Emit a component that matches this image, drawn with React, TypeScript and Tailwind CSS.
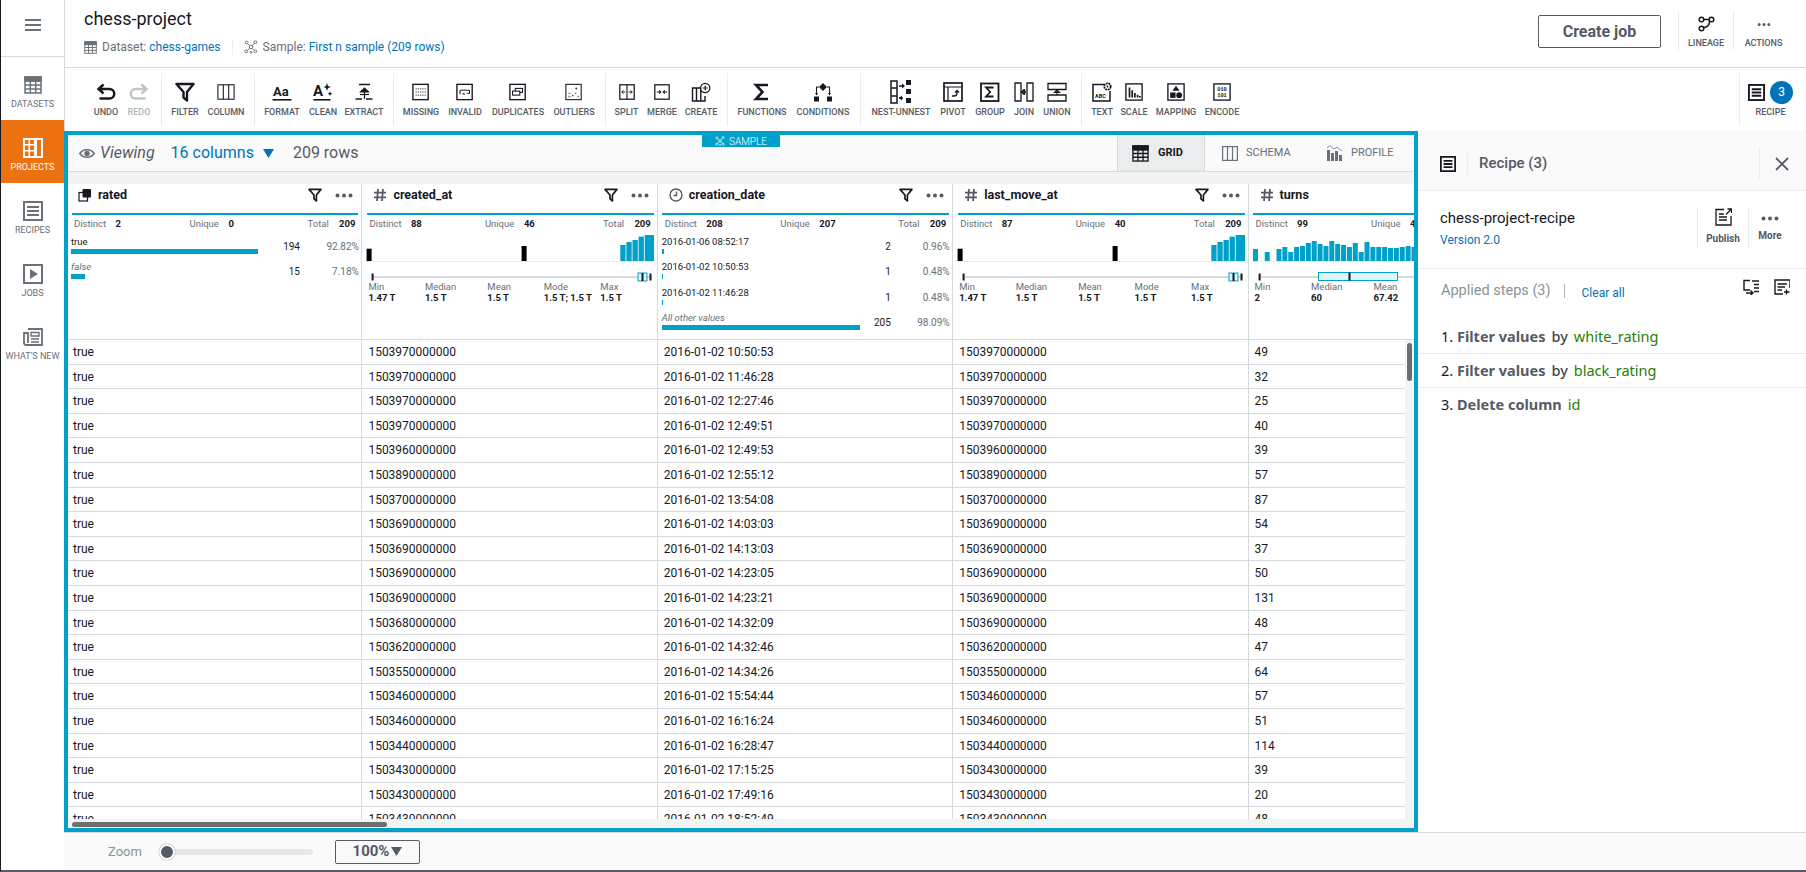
import React from "react";

const cc = { fill: "none", stroke: "currentColor", strokeWidth: 1.6 };

function Sv({ s = 20, children, className = "" }: { s?: number; children: React.ReactNode; className?: string }) {
  return (
    <svg width={s} height={s} viewBox="0 0 20 20" className={className} {...cc}>
      {children}
    </svg>
  );
}

const Dots = ({ className = "" }: { className?: string }) => (
  <svg width="18" height="5" viewBox="0 0 18 5" className={className}>
    <circle cx="2.5" cy="2.5" r="2" fill="currentColor" />
    <circle cx="9" cy="2.5" r="2" fill="currentColor" />
    <circle cx="15.5" cy="2.5" r="2" fill="currentColor" />
  </svg>
);

const FilterIcon = ({ s = 14 }: { s?: number }) => (
  <svg width={s} height={s} viewBox="0 0 20 20" fill="none" stroke="currentColor" strokeWidth="2.4">
    <path d="M1.5 2 H18.5 L12 10 V18.5 L8.5 15.5 V10 Z" strokeLinejoin="round" />
  </svg>
);

const RecipeIcon = ({ s = 18 }: { s?: number }) => (
  <svg width={s} height={s} viewBox="0 0 18 18" fill="none" stroke="currentColor" strokeWidth="2">
    <rect x="1" y="1" width="16" height="16" />
    <path d="M4 5.5 H14 M4 9 H14 M4 12.5 H14" />
  </svg>
);

const GridIcon = ({ s = 16, w = 1.4 }: { s?: number; w?: number }) => (
  <svg width={s} height={s} viewBox="0 0 18 18" fill="none" stroke="currentColor" strokeWidth={w}>
    <rect x="1" y="1" width="16" height="16" />
    <path d="M1 5 H17 M1 9 H17 M1 13 H17 M6.3 5 V17 M11.7 5 V17" />
    <rect x="1" y="1" width="16" height="4" fill="currentColor" />
  </svg>
);

const SampleIcon = ({ s = 14 }: { s?: number }) => (
  <svg width={s} height={s} viewBox="0 0 16 16" fill="none" stroke="currentColor" strokeWidth="1.1">
    <circle cx="3" cy="3" r="1.6" />
    <circle cx="13" cy="2.5" r="1.6" />
    <circle cx="8" cy="8" r="2" />
    <circle cx="2.5" cy="13" r="1.6" />
    <circle cx="13" cy="13" r="1.6" />
    <circle cx="8" cy="14" r="1" />
    <path d="M4.2 4.2 L6.5 6.5 M11.8 3.7 L9.5 6.5 M4 11.8 L6.5 9.5 M11.8 11.8 L9.5 9.5" />
  </svg>
);

const HashIcon = () => (
  <svg width="14" height="14" viewBox="0 0 14 14" fill="none" stroke="#545b64" strokeWidth="1.8">
    <path d="M5 1 L4 13 M10 1 L9 13 M1 4.7 H13 M1 9.3 H13" />
  </svg>
);

const ClockIcon = () => (
  <svg width="14" height="14" viewBox="0 0 14 14" fill="none" stroke="#545b64" strokeWidth="1.4">
    <circle cx="7" cy="7" r="6" />
    <path d="M7.5 3.5 V7.5 H4.5" />
  </svg>
);

const BoolIcon = () => (
  <svg width="14" height="14" viewBox="0 0 14 14">
    <rect x="1" y="4.5" width="8.5" height="8.5" fill="none" stroke="#16191f" strokeWidth="1.2" />
    <rect x="4.5" y="1" width="8.5" height="8.5" rx="1" fill="#16191f" />
  </svg>
);

const tbIcons: Record<string, React.ReactNode> = {
  UNDO: (
    <Sv s={20}>
      <path d="M7.5 2.5 L2.5 7 L7.5 11.5 M3 7 H13.5 A4.5 4.5 0 0 1 13.5 16.5 H3.5" strokeWidth="2.5" />
    </Sv>
  ),
  REDO: (
    <Sv s={20} className="text-[#c0c4c6]">
      <path d="M12.5 2.5 L17.5 7 L12.5 11.5 M17 7 H6.5 A4.5 4.5 0 0 0 6.5 16.5 H16.5" strokeWidth="2.5" />
    </Sv>
  ),
  FILTER: <FilterIcon s={20} />,
  COLUMN: (
    <Sv s={18}>
      <rect x="1" y="2" width="18" height="16" strokeWidth="1.2" />
      <path d="M7 2 V18 M13 2 V18" strokeWidth="1.2" />
    </Sv>
  ),
  FORMAT: (
    <svg width="20" height="20" viewBox="0 0 20 20">
      <text x="1" y="14" fontSize="13" fontWeight="700" fill="currentColor" fontFamily="Roboto, sans-serif">Aa</text>
      <rect x="0.5" y="17" width="19" height="1.6" fill="currentColor" />
    </svg>
  ),
  CLEAN: (
    <svg width="20" height="20" viewBox="0 0 20 20">
      <text x="0" y="14" fontSize="15" fontWeight="700" fill="currentColor" fontFamily="Roboto, sans-serif">A</text>
      <path d="M14 1 L15 4 L18 5 L15 6 L14 9 L13 6 L10.5 5 L13 4 Z M17 9 L17.7 11 L19.5 11.7 L17.7 12.4 L17 14 L16.3 12.4 L14.8 11.7 L16.3 11 Z" fill="currentColor" />
      <rect x="0.5" y="17" width="17" height="1.6" fill="currentColor" />
    </svg>
  ),
  EXTRACT: (
    <Sv s={20}>
      <path d="M5 2.5 H16 M1.5 17 H8 M12 17 H18.5" strokeWidth="1.7" />
      <path d="M10.5 17 V6 M6.5 10 L10.5 6 L14.5 10 Z" fill="currentColor" strokeWidth="1.2" />
      <path d="M6 12.5 H15" strokeWidth="1.2" />
    </Sv>
  ),
  MISSING: (
    <Sv s={18}>
      <rect x="1" y="1.5" width="17" height="17" strokeWidth="1.5" />
      <path d="M4 6.5 H15.5 M4 10 H15.5 M4 13.5 H15.5" strokeWidth="1" strokeDasharray="1.3 1.2" />
    </Sv>
  ),
  INVALID: (
    <Sv s={18}>
      <rect x="1" y="1.5" width="17" height="17" strokeWidth="1.5" />
      <path d="M4.5 8 V12.5 M4.5 8 H15 V11.5 H12 M7.5 11 L9.5 13 M9.5 11 L7.5 13" strokeWidth="1.1" />
    </Sv>
  ),
  DUPLICATES: (
    <Sv s={18}>
      <rect x="1" y="1.5" width="17" height="17" strokeWidth="1.5" />
      <rect x="7" y="6" width="8" height="4.5" strokeWidth="1.2" />
      <rect x="4" y="9" width="8" height="4.5" strokeWidth="1.2" fill="#fff" />
    </Sv>
  ),
  OUTLIERS: (
    <Sv s={18}>
      <rect x="1" y="1.5" width="17" height="17" strokeWidth="1.2" />
      <circle cx="12.5" cy="6" r="1" fill="currentColor" stroke="none" />
      <path d="M4 11.5 h2 M8 14 h2 M4 15 h2 M11.5 11.5 h1.5 M14 15 h1.5" strokeWidth="1.4" strokeDasharray="1 .7" />
    </Sv>
  ),
  SPLIT: (
    <Sv s={16}>
      <rect x="1" y="1" width="18" height="18" strokeWidth="1.6" />
      <path d="M10 1 V19" strokeWidth="1.4" />
      <path d="M3.5 10 H8 M12 10 H16.5 M5.5 8 L3.5 10 L5.5 12 M14.5 8 L16.5 10 L14.5 12" strokeWidth="1.2" />
    </Sv>
  ),
  MERGE: (
    <Sv s={16}>
      <rect x="1" y="1" width="18" height="18" strokeWidth="1.6" />
      <path d="M3.5 10 H8 M12 10 H16.5 M6.5 8 L8.5 10 L6.5 12 M13.5 8 L11.5 10 L13.5 12" strokeWidth="1.3" />
    </Sv>
  ),
  CREATE: (
    <Sv s={20}>
      <path d="M10 6 H1.5 V19 H14 V14 M5.5 6 V19 M9.8 6 V19" strokeWidth="1.4" />
      <circle cx="14.2" cy="6" r="4.6" strokeWidth="1.3" fill="#fff" />
      <path d="M14.2 3.5 V8.5 M11.7 6 H16.7" strokeWidth="1.2" />
    </Sv>
  ),
  FUNCTIONS: (
    <Sv s={20}>
      <path d="M16 3 H4 L10.5 10 L4 17 H16" strokeWidth="2.6" />
    </Sv>
  ),
  CONDITIONS: (
    <svg width="20" height="20" viewBox="0 0 20 20" fill="currentColor" stroke="none">
      <path d="M10 1 L14 5 L10 9 L6 5 Z" />
      <path d="M6 5 H3.5 V12 M14 5 H16.5 V12" fill="none" stroke="currentColor" strokeWidth="1.1" />
      <path d="M2 11 H5 L3.5 13.5 Z M15 11 H18 L16.5 13.5 Z" />
      <rect x="1" y="14.5" width="5" height="5" />
      <rect x="14" y="14.5" width="5" height="5" />
    </svg>
  ),
  "NEST-UNNEST": (
    <svg width="22" height="24" viewBox="0 0 22 24" fill="none" stroke="currentColor">
      <path d="M1 1 H7 V23 H1 Z M1 8 H7 M1 16 H7" strokeWidth="1.5" />
      <rect x="16" y="0" width="5" height="5" fill="currentColor" stroke="none" />
      <rect x="16" y="9" width="5" height="5" fill="currentColor" stroke="none" />
      <rect x="16" y="18" width="5" height="5" fill="currentColor" stroke="none" />
      <path d="M9 6 H13 M9 18 H13" strokeWidth="1.4" />
      <path d="M12 3.5 L15 6 L12 8.5 Z M12 15.5 L9 18 L12 20.5 Z" fill="currentColor" stroke="none" />
    </svg>
  ),
  PIVOT: (
    <Sv s={20}>
      <rect x="1" y="1" width="18" height="18" strokeWidth="1.7" />
      <path d="M1 5 H19 M5 5 V19" strokeWidth="1.2" />
      <path d="M9 14 H11 A3 3 0 0 0 14 11 V9 M12 10.5 L14 8.5 L16 10.5" strokeWidth="1.3" />
    </Sv>
  ),
  GROUP: (
    <Sv s={20}>
      <rect x="1" y="1.5" width="17.5" height="17.5" strokeWidth="1.8" />
      <path d="M13.5 5.5 H6 L10.2 10 L6 14.5 H13.5" strokeWidth="1.8" />
    </Sv>
  ),
  JOIN: (
    <Sv s={20}>
      <path d="M1 1 H7 V19 H1 Z M13 1 H19 V19 H13 Z" strokeWidth="1.3" />
      <path d="M7 10 H12 M10 7.5 L7.5 10 L10 12.5" strokeWidth="1.3" />
      <path d="M10.5 7 V13" strokeWidth="1.4" />
    </Sv>
  ),
  UNION: (
    <Sv s={20}>
      <path d="M1 1.5 H19 V7.5 H1 Z M1 13 H19 V19 H1 Z" strokeWidth="1.3" />
      <path d="M10 13 V9 M7.5 10.5 L10 8 L12.5 10.5 M6.5 10.5 H13.5" strokeWidth="1.1" />
    </Sv>
  ),
  TEXT: (
    <svg width="20" height="20" viewBox="0 0 20 20" fill="none" stroke="currentColor">
      <path d="M12 2.5 H1 V19 H18 V9" strokeWidth="1.5" />
      <text x="3" y="16" fontSize="5.5" fontWeight="700" fill="currentColor" stroke="none" fontFamily="Roboto, sans-serif">ABC</text>
      <circle cx="15.5" cy="4.5" r="3.2" strokeWidth="1.8" strokeDasharray="2 .6" fill="#fff" />
      <circle cx="15.5" cy="4.5" r="1" fill="currentColor" stroke="none" />
    </svg>
  ),
  SCALE: (
    <Sv s={18}>
      <rect x="1" y="1" width="18" height="18" strokeWidth="1.5" />
      <path d="M5 5 V16 M8 8 V16 M11 11 V16 M14 13 V16 M16.5 14.5 V16" strokeWidth="1.9" />
    </Sv>
  ),
  MAPPING: (
    <svg width="18" height="18" viewBox="0 0 20 20" fill="currentColor">
      <rect x="1" y="1" width="18" height="18" fill="none" stroke="currentColor" strokeWidth="1.5" />
      <path d="M10 3 L14 8.5 H6 Z" />
      <rect x="3.5" y="10.5" width="6" height="6" />
      <circle cx="13.5" cy="13.5" r="3.2" />
    </svg>
  ),
  ENCODE: (
    <svg width="18" height="18" viewBox="0 0 20 20">
      <rect x="1" y="1" width="18" height="18" fill="none" stroke="currentColor" strokeWidth="1.5" />
      <text x="10" y="9" fontSize="6" textAnchor="middle" fontWeight="700" fill="currentColor" fontFamily="Liberation Mono, monospace">010</text>
      <text x="10" y="15.5" fontSize="6" textAnchor="middle" fontWeight="700" fill="currentColor" fontFamily="Liberation Mono, monospace">101</text>
    </svg>
  ),
};

type Btn = { l: string; w: string };
type Group = { c: string; items: Btn[] };

const groups: Group[] = [
  { c: "pl-[24px] pr-[6px]", items: [{ l: "UNDO", w: "w-[34px]" }, { l: "REDO", w: "w-[32px]" }] },
  { c: "pl-[6px] pr-[4px]", items: [{ l: "FILTER", w: "w-[34px]" }, { l: "COLUMN", w: "w-[48px]" }] },
  { c: "pl-[7px] pr-[9px]", items: [{ l: "FORMAT", w: "w-[40px]" }, { l: "CLEAN", w: "w-[42px]" }, { l: "EXTRACT", w: "w-[40px]" }] },
  { c: "pl-[6px] pr-[5px]", items: [{ l: "MISSING", w: "w-[42px]" }, { l: "INVALID", w: "w-[46px]" }, { l: "DUPLICATES", w: "w-[60px]" }, { l: "OUTLIERS", w: "w-[52px]" }] },
  { c: "pl-[4px] pr-[6px]", items: [{ l: "SPLIT", w: "w-[33px]" }, { l: "MERGE", w: "w-[38px]" }, { l: "CREATE", w: "w-[40px]" }] },
  { c: "pl-[4px] pr-[6px]", items: [{ l: "FUNCTIONS", w: "w-[60px]" }, { l: "CONDITIONS", w: "w-[62px]" }] },
  { c: "pl-[5px] pr-[5px]", items: [{ l: "NEST-UNNEST", w: "w-[70px]" }, { l: "PIVOT", w: "w-[34px]" }, { l: "GROUP", w: "w-[40px]" }, { l: "JOIN", w: "w-[28px]" }, { l: "UNION", w: "w-[38px]" }] },
  { c: "pl-[6px]", items: [{ l: "TEXT", w: "w-[28px]" }, { l: "SCALE", w: "w-[36px]" }, { l: "MAPPING", w: "w-[48px]" }, { l: "ENCODE", w: "w-[44px]" }] },
];

function ToolBtn({ l, w }: Btn) {
  const off = l === "REDO";
  return (
    <div className={`${w} h-full flex flex-col items-center shrink-0`}>
      <div className="h-[30px] flex items-center justify-center mt-[4px] text-[#16191f]">{tbIcons[l]}</div>
      <div className={`text-[9px] leading-[12px] -mt-[1px] font-medium whitespace-nowrap ${off ? "text-[#aab7b8]" : "text-[#545b64]"}`}>{l}</div>
    </div>
  );
}

function SideItem({ label, active, icon }: { label: string; active?: boolean; icon: React.ReactNode }) {
  return (
    <div className={`h-[63px] flex flex-col items-center pt-[17px] ${active ? "bg-[#ec7211] text-white" : "text-[#687078]"}`}>
      <div className="h-[21px] flex items-center">{icon}</div>
      <div className="text-[9px] leading-[12px] mt-[3px] whitespace-nowrap">{label}</div>
    </div>
  );
}

const dates = ["10:50:53", "11:46:28", "12:27:46", "12:49:51", "12:49:53", "12:55:12", "13:54:08", "14:03:03", "14:13:03", "14:23:05", "14:23:21", "14:32:09", "14:32:46", "14:34:26", "15:54:44", "16:16:24", "16:28:47", "17:15:25", "17:49:16", "18:52:49"];
const created = ["1503970000000", "1503970000000", "1503970000000", "1503970000000", "1503960000000", "1503890000000", "1503700000000", "1503690000000", "1503690000000", "1503690000000", "1503690000000", "1503680000000", "1503620000000", "1503550000000", "1503460000000", "1503460000000", "1503440000000", "1503430000000", "1503430000000", "1503430000000"];
const moved = created.map((c, i) => (i === 11 ? "1503690000000" : c));
const turns = ["49", "32", "25", "40", "39", "57", "87", "54", "37", "50", "131", "48", "47", "64", "57", "51", "114", "39", "20", "48"];

function StatRow({ d, u, t }: { d: string; u: string; t?: string }) {
  return (
    <div className="flex pl-[7px] h-[20px] items-center text-[9.5px] whitespace-nowrap">
      <span className="w-[41.5px] text-[#687078]">Distinct</span>
      <span className="w-[74px] font-bold text-[#16191f]">{d}</span>
      <span className="w-[39px] text-[#687078]">Unique</span>
      <span className="w-[79px] font-bold text-[#16191f]">{u}</span>
      {t && <span className="w-[31.5px] text-[#687078]">Total</span>}
      {t && <span className="font-bold text-[#16191f]">{t}</span>}
    </div>
  );
}

function ValueRow({ label, italic, bar, n, pct }: { label: string; italic?: boolean; bar: string; n: string; pct: string }) {
  return (
    <div className="flex pl-[4px] pr-[2.5px] h-[25.5px] text-[10px] whitespace-nowrap">
      <div className="w-[200px]">
        <div className={`h-[14px] leading-[14px] text-[9.5px] ${italic ? "italic text-[#687078]" : "text-[#16191f]"}`}>{label}</div>
        <div className={`${bar} h-[5px] bg-[#00a1c9]`} />
      </div>
      <div className="w-[29px] text-right leading-[24px] text-[#16191f]">{n}</div>
      <div className="flex-1 text-right leading-[24px] text-[#687078]">{pct}</div>
    </div>
  );
}

function Summary({ vals }: { vals: [string, string][] }) {
  const lefts = ["w-[56.5px]", "w-[62.5px]", "w-[56.5px]", "w-[56.5px]", "w-[56.5px]"];
  return (
    <div className="flex pl-[6px] text-[9.5px] leading-[11px] whitespace-nowrap -mt-[2px]">
      {vals.map(([k, v], i) => (
        <div key={k} className={lefts[i]}>
          <div className="text-[#687078]">{k}</div>
          <div className="font-bold text-[#16191f]">{v}</div>
        </div>
      ))}
    </div>
  );
}

function LongChart() {
  return (
    <svg width="294" height="51" viewBox="0 0 294 51" className="block -mt-[2.5px]">
      <rect x="4.6" y="29" width="287.4" height="1" fill="#eaeded" />
      <rect x="4.6" y="16.7" width="5" height="12.3" fill="#000" />
      <rect x="159.6" y="14" width="5" height="15" fill="#000" />
      <rect x="258.3" y="13" width="5.3" height="16" fill="#00a1c9" />
      <rect x="264.4" y="10" width="5.3" height="19" fill="#00a1c9" />
      <rect x="270.5" y="8" width="5.3" height="21" fill="#00a1c9" />
      <rect x="276.6" y="4.6" width="5.3" height="24.4" fill="#00a1c9" />
      <rect x="282.7" y="3" width="9.3" height="26" fill="#00a1c9" />
      <rect x="9.6" y="44" width="280" height="2" fill="#d5dbdb" />
      <rect x="9.6" y="41.5" width="2" height="7" fill="#16191f" />
      <rect x="276" y="41" width="9" height="8" fill="#e1f4fa" stroke="#00a1c9" />
      <rect x="279.5" y="41" width="2" height="8" fill="#16191f" />
      <rect x="287.5" y="41.5" width="2" height="7" fill="#16191f" />
    </svg>
  );
}

const turnBars = [12, 0, 9, 0, 12, 14, 9, 14, 15, 18, 20, 17, 15, 20, 17, 16, 14, 18, 9, 19, 14, 14, 14, 13, 13, 14, 15, 14, 11];

function TurnsChart() {
  return (
    <svg width="294" height="51" viewBox="0 0 294 51" className="block -mt-[2.5px]">
      <rect x="4" y="29" width="290" height="1" fill="#eaeded" />
      {turnBars.map((h, i) => (
        <rect key={i} x={4 + i * 5.87} y={29 - h} width="5" height={h} fill="#00a1c9" />
      ))}
      <rect x="10" y="44" width="280" height="2" fill="#d5dbdb" />
      <rect x="9.6" y="41.5" width="2" height="7" fill="#16191f" />
      <rect x="69.5" y="40.5" width="79" height="8" fill="#e1f4fa" stroke="#00a1c9" />
      <rect x="99.5" y="40.5" width="2" height="8" fill="#16191f" />
    </svg>
  );
}

function Col({ icon, name, children }: { icon: React.ReactNode; name: string; children: React.ReactNode }) {
  return (
    <div className="w-[295.4px] shrink-0 border-r border-[#d5dbdb] flex flex-col">
      <div className="h-[28.5px] flex items-center pl-[11px] pr-[8px] pb-[6px]">
        <div className="w-[20px] flex items-center">{icon}</div>
        <div className="flex-1 text-[12.5px] font-bold text-[#16191f] whitespace-nowrap">{name}</div>
        <div className="text-[#16191f]"><FilterIcon s={14} /></div>
        <Dots className="ml-[13px] text-[#545b64]" />
      </div>
      <div className="h-[2px] bg-[#00a1c9] ml-[4.5px] mr-[3px]" />
      {children}
    </div>
  );
}

function Row({ a, b, c, d, e }: { a: string; b: string; c: string; d: string; e: string }) {
  const cell = "w-[295.4px] shrink-0 border-r border-[#d5dbdb] pl-[6px] leading-[25px] overflow-hidden whitespace-nowrap";
  return (
    <div className="flex h-[24.6px] border-b border-[#d5dbdb] text-[12px] text-[#16191f]">
      <div className={cell}>{a}</div>
      <div className={cell}>{b}</div>
      <div className={cell}>{c}</div>
      <div className={cell}>{d}</div>
      <div className={cell}>{e}</div>
    </div>
  );
}

function Step({ n, a, g, last }: { n: string; a: string; g: string; last?: boolean }) {
  return (
    <div className={`h-[34px] flex items-center pl-[23px] text-[14.5px] whitespace-nowrap font-['Noto_Sans',sans-serif] ${last ? "" : "border-b border-[#eaeded]"}`}>
      <span className="text-[#16191f]">{n}&nbsp;</span>
      <span className="font-bold text-[#545b64]">{a}</span>
      {a === "Filter values" && <span className="ml-[6px] font-medium text-[#414750]">by</span>}
      <span className="ml-[6px] text-[#1d8102]">{g}</span>
    </div>
  );
}

export default function App() {
  return (
    <div className="w-[1806px] h-[872px] overflow-hidden flex bg-white border-l border-b-2 border-l-[#16191f] border-b-[#545b64] font-['Roboto',sans-serif] text-[#16191f]">
      {/* sidebar */}
      <aside className="w-[64px] shrink-0 border-r border-[#d5dbdb] bg-white">
        <div className="h-[57px] border-b border-[#d5dbdb] flex items-center justify-center pb-[7px] text-[#687078]">
          <svg width="16" height="14" viewBox="0 0 16 14" fill="none" stroke="currentColor" strokeWidth="2">
            <path d="M0 2 H16 M0 7 H16 M0 12 H16" />
          </svg>
        </div>
        <SideItem label="DATASETS" icon={<GridIcon s={18} w={1.5} />} />
        <SideItem
          label="PROJECTS"
          active
          icon={
            <svg width="20" height="20" viewBox="0 0 20 20" fill="currentColor">
              <path fillRule="evenodd" d="M0 0 H20 V20 H0 Z M2 2 V6 H5.5 V2 Z M7 2 V6 H11 V2 Z M2 7.5 V12 H5.5 V7.5 Z M7 7.5 V12 H11 V7.5 Z M2 13.5 V18 H5.5 V13.5 Z M7 13.5 V18 H11 V13.5 Z M14 2 V18 H18 V2 Z" />
            </svg>
          }
        />
        <SideItem
          label="RECIPES"
          icon={
            <svg width="20" height="20" viewBox="0 0 20 20" fill="none" stroke="currentColor" strokeWidth="2">
              <rect x="1" y="1" width="18" height="18" />
              <path d="M4 6 H16 M4 10 H16 M4 14 H16" />
            </svg>
          }
        />
        <SideItem
          label="JOBS"
          icon={
            <svg width="20" height="20" viewBox="0 0 20 20" fill="none" stroke="currentColor" strokeWidth="2">
              <rect x="1" y="1" width="18" height="18" />
              <path d="M7 5 L15 10 L7 15 Z" fill="currentColor" stroke="none" />
            </svg>
          }
        />
        <SideItem
          label="WHAT'S NEW"
          icon={
            <svg width="20" height="20" viewBox="0 0 20 20" fill="none" stroke="currentColor" strokeWidth="1.8">
              <path d="M5 2 H19 V18 H3 A2 2 0 0 1 1 16 V6 H5 V16" />
              <path d="M8 5.5 H16 V9 H8 Z M8 12 H16 M8 15 H16" strokeWidth="1.4" />
            </svg>
          }
        />
      </aside>

      <div className="flex-1 flex flex-col min-w-0">
        {/* header */}
        <header className="h-[68px] shrink-0 border-b border-[#d5dbdb] flex pl-[19px]">
          <div className="flex-1">
            <div className="text-[18px] leading-[24px] mt-[7px] text-[#16191f]">chess-project</div>
            <div className="flex items-center mt-[8px] text-[12px] leading-[16px] text-[#687078]">
              <GridIcon s={13} w={1.3} />
              <span className="ml-[5px]">Dataset:&nbsp;</span>
              <span className="text-[#0073bb]">chess-games</span>
              <span className="w-px h-[16px] bg-[#eaeded] ml-[11px] mr-[11px]" />
              <SampleIcon />
              <span className="ml-[5px]">Sample:&nbsp;</span>
              <span className="text-[#0073bb]">First n sample (209 rows)</span>
            </div>
          </div>
          <div className="w-[123px] h-[33px] mt-[15px] border border-[#545b64] rounded-[2px] flex items-center justify-center text-[16px] font-bold text-[#545b64]">Create job</div>
          <div className="ml-[17px] mt-[11px] h-[39px] w-[56px] border-x border-[#eaeded] flex flex-col items-center">
            <svg width="17" height="17" viewBox="0 0 17 17" fill="none" stroke="#16191f" strokeWidth="1.5" className="mt-[5px]">
              <circle cx="3.5" cy="3.5" r="2.3" />
              <circle cx="3.5" cy="12.5" r="2.3" />
              <circle cx="13.5" cy="3.5" r="2.3" />
              <path d="M6 3.5 H11 M11.5 5 A6 6 0 0 1 6 11.5" />
            </svg>
            <div className="text-[9px] leading-[12px] font-medium text-[#545b64] mt-[4px]">LINEAGE</div>
          </div>
          <div className="mt-[11px] h-[39px] w-[59px] flex flex-col items-center">
            <Dots className="mt-[11px] scale-75 text-[#545b64]" />
            <div className="text-[9px] leading-[12px] font-medium text-[#545b64] mt-[10px]">ACTIONS</div>
          </div>
          <div className="w-[13px]" />
        </header>

        {/* toolbar */}
        <div className="h-[63px] shrink-0 flex items-stretch">
          {groups.map((g, i) => (
            <div key={i} className={`flex ${g.c} ${i < groups.length - 1 ? "border-r border-[#eaeded]" : ""} my-[5px] h-[53px]`}>
              {g.items.map((b) => (
                <ToolBtn key={b.l} {...b} />
              ))}
            </div>
          ))}
          <div className="flex-1" />
          <div className="w-[62px] mr-[5px] my-[5px] h-[53px] border-l border-[#eaeded] flex flex-col items-center">
            <div className="h-[30px] mt-[4px] flex items-center gap-[5px]">
              <RecipeIcon s={17} />
              <span className="w-[23px] h-[23px] rounded-full bg-[#0073bb] text-white text-[12px] flex items-center justify-center">3</span>
            </div>
            <div className="text-[9px] leading-[12px] -mt-[1px] font-medium text-[#545b64]">RECIPE</div>
          </div>
        </div>

        {/* workspace */}
        <div className="h-[701px] shrink-0 flex">
          <section className="w-[1354px] shrink-0 -ml-px border-4 border-[#00a1c9] flex flex-col relative">
            <div className="absolute left-[634px] top-0 w-[78px] h-[12px] bg-[#00a1c9] text-white text-[10px] font-light flex items-center justify-center gap-[4px] z-10">
              <SampleIcon s={10} />
              <span>SAMPLE</span>
            </div>
            {/* viewing bar */}
            <div className="h-[37px] shrink-0 bg-[#fafafa] border-b border-[#d5dbdb] flex">
              <div className="w-[1049px] shrink-0 flex items-center pl-[11px] text-[16px]">
                <svg width="16" height="11" viewBox="0 0 16 11" fill="none" stroke="#687078" strokeWidth="1.5">
                  <path d="M0.8 5.5 C4 0.5 12 0.5 15.2 5.5 C12 10.5 4 10.5 0.8 5.5 Z" />
                  <circle cx="8" cy="5.5" r="2" fill="#687078" />
                </svg>
                <span className="ml-[5px] italic text-[#545b64]">Viewing</span>
                <span className="ml-[16px] text-[#0073bb]">16 columns</span>
                <svg width="11" height="9" viewBox="0 0 11 9" className="ml-[9px]"><path d="M0 0 H11 L5.5 9 Z" fill="#0073bb" /></svg>
                <span className="ml-[19px] text-[#545b64]">209 rows</span>
              </div>
              <div className="w-[88px] shrink-0 h-[36px] bg-[#eaeded] border-x border-[#d5dbdb] flex items-center pl-[14px] text-[#16191f]">
                <GridIcon s={17} w={1.4} />
                <span className="ml-[9px] text-[11px] font-bold">GRID</span>
              </div>
              <div className="w-[122px] shrink-0 flex items-center pl-[17px] text-[#687078]">
                <svg width="16" height="15" viewBox="0 0 16 15" fill="none" stroke="currentColor" strokeWidth="1.2">
                  <rect x="0.6" y="0.6" width="14.8" height="13.8" />
                  <path d="M5.5 0.6 V14.4 M10.5 0.6 V14.4" />
                </svg>
                <span className="ml-[8px] text-[11px]">SCHEMA</span>
              </div>
              <div className="flex-1 flex items-center text-[#687078]">
                <svg width="15" height="16" viewBox="0 0 15 16" fill="currentColor" stroke="none">
                  <rect x="0" y="5" width="3" height="11" />
                  <rect x="4" y="8" width="3" height="8" />
                  <rect x="8" y="6" width="3" height="10" />
                  <rect x="12" y="10" width="3" height="6" />
                  <path d="M0 3 L3 0.5 L7 4 L10 2 L15 6" fill="none" stroke="currentColor" strokeWidth="0.8" />
                </svg>
                <span className="ml-[9px] text-[11px]">PROFILE</span>
              </div>
            </div>
            <div className="h-[12px] shrink-0 bg-[#f2f3f3]" />

            {/* table */}
            <div className="relative flex-1 overflow-hidden bg-white">
              <div className="flex h-[156px] border-b border-[#d5dbdb] -ml-px">
                <Col icon={<BoolIcon />} name="rated">
                  <StatRow d="2" u="0" t="209" />
                  <ValueRow label="true" bar="w-[187px]" n="194" pct="92.82%" />
                  <ValueRow label="false" italic bar="w-[14px]" n="15" pct="7.18%" />
                </Col>
                <Col icon={<HashIcon />} name="created_at">
                  <StatRow d="88" u="46" t="209" />
                  <LongChart />
                  <Summary vals={[["Min", "1.47 T"], ["Median", "1.5 T"], ["Mean", "1.5 T"], ["Mode", "1.5 T; 1.5 T"], ["Max", "1.5 T"]]} />
                </Col>
                <Col icon={<ClockIcon />} name="creation_date">
                  <StatRow d="208" u="207" t="209" />
                  <ValueRow label="2016-01-06 08:52:17" bar="w-[2px]" n="2" pct="0.96%" />
                  <ValueRow label="2016-01-02 10:50:53" bar="w-[1px]" n="1" pct="0.48%" />
                  <ValueRow label="2016-01-02 11:46:28" bar="w-[1px]" n="1" pct="0.48%" />
                  <ValueRow label="All other values" italic bar="w-[198px]" n="205" pct="98.09%" />
                </Col>
                <Col icon={<HashIcon />} name="last_move_at">
                  <StatRow d="87" u="40" t="209" />
                  <LongChart />
                  <Summary vals={[["Min", "1.47 T"], ["Median", "1.5 T"], ["Mean", "1.5 T"], ["Mode", "1.5 T"], ["Max", "1.5 T"]]} />
                </Col>
                <Col icon={<HashIcon />} name="turns">
                  <StatRow d="99" u="4" />
                  <TurnsChart />
                  <Summary vals={[["Min", "2"], ["Median", "60"], ["Mean", "67.42"]]} />
                </Col>
              </div>
              <div className="-ml-px">
                {dates.map((t, i) => (
                  <Row key={i} a="true" b={created[i]} c={`2016-01-02 ${t}`} d={moved[i]} e={turns[i]} />
                ))}
              </div>
              {/* scrollbars */}
              <div className="absolute right-0 top-[156px] bottom-0 w-[9px] bg-[#f2f3f3]">
                <div className="ml-[2px] mt-[3px] w-[5px] h-[38px] rounded-[3px] bg-[#6f6f6f]" />
              </div>
              <div className="absolute left-0 right-0 bottom-0 h-[9px] bg-[#f2f3f3]">
                <div className="ml-[4px] mt-[3px] w-[315px] h-[5px] rounded-[3px] bg-[#6f6f6f]" />
              </div>
            </div>
          </section>

          {/* recipe panel */}
          <aside className="flex-1 min-w-0 bg-white flex flex-col">
            <div className="h-[60px] shrink-0 bg-[#fafafa] border-b border-[#eaeded] flex items-center pl-[22px] pr-[17px] pt-[6px]">
              <RecipeIcon s={16} />
              <span className="w-px h-[20px] bg-[#eaeded] ml-[11px]" />
              <span className="ml-[11px] text-[15px] font-medium text-[#545b64] flex-1">Recipe (3)</span>
              <span className="w-px h-[31px] bg-[#eaeded]" />
              <svg width="14" height="14" viewBox="0 0 14 14" stroke="#545b64" strokeWidth="1.8" className="ml-[15px]">
                <path d="M1 1 L13 13 M13 1 L1 13" />
              </svg>
            </div>
            <div className="h-[78px] shrink-0 border-b border-[#eaeded] flex pl-[22px]">
              <div className="flex-1">
                <div className="text-[15px] leading-[20px] mt-[17px] text-[#16191f]">chess-project-recipe</div>
                <div className="text-[12px] leading-[16px] mt-[4px] text-[#0073bb]">Version 2.0</div>
              </div>
              <div className="mt-[17px] h-[40px] w-[52px] border-x border-[#eaeded] flex flex-col items-center">
                <svg width="17" height="18" viewBox="0 0 17 18" fill="none" stroke="#16191f" strokeWidth="1.3">
                  <path d="M9 1.5 H1 V17 H16 V8" />
                  <path d="M4 6 H9 M4 9 H12 M4 12 H12" />
                  <path d="M11 6.5 L16.5 1 M12.5 1 H16.5 V5" />
                </svg>
                <div className="text-[10px] leading-[14px] font-bold text-[#545b64] mt-[6px]">Publish</div>
              </div>
              <div className="mt-[17px] h-[40px] w-[42px] flex flex-col items-center">
                <Dots className="mt-[8px] text-[#545b64]" />
                <div className="text-[10px] leading-[14px] font-bold text-[#545b64] mt-[8px]">More</div>
              </div>
              <div className="w-[15px]" />
            </div>
            <div className="h-[51px] shrink-0 flex pl-[23px] pr-[16px] items-start">
              <span className="text-[14.5px] leading-[20px] mt-[12px] text-[#879596]">Applied steps (3)</span>
              <span className="w-px h-[14px] bg-[#aab7b8] ml-[13px] mt-[15px]" />
              <span className="text-[12px] leading-[16px] ml-[17px] mt-[16px] text-[#0073bb] flex-1">Clear all</span>
              <svg width="16" height="16" viewBox="0 0 16 16" fill="none" stroke="#16191f" strokeWidth="1.4" className="mt-[10px]">
                <path d="M7 1.5 H1 V11 H7 M9 2 H16 M11 5.5 H16 M11 9 H16 M11 12.5 H16" />
                <path d="M3 14 H10 M7.5 11.5 L10 14 L7.5 16" />
              </svg>
              <svg width="16" height="16" viewBox="0 0 16 16" fill="none" stroke="#16191f" strokeWidth="1.4" className="mt-[10px] ml-[15px]">
                <path d="M16 9 V1 H1 V15 H9" />
                <path d="M3.5 5 H13 M3.5 8 H11 M3.5 11 H8 M12.5 10.5 V15.5 M10 13 H15.5" />
              </svg>
            </div>
            <Step n="1." a="Filter values" g="white_rating" />
            <Step n="2." a="Filter values" g="black_rating" />
            <Step n="3." a="Delete column" g="id" last />
          </aside>
        </div>

        {/* zoom bar */}
        <div className="flex-1 -ml-px bg-[#fafafa] border-t border-[#d5dbdb] flex items-center relative">
          <span className="ml-[44px] text-[13px] text-[#879596] w-[50px]">Zoom</span>
          <div className="relative w-[154px] h-[6px] rounded-full bg-[#e5e8e8] ml-[1px]">
            <span className="absolute left-0 top-[-5px] w-[16px] h-[16px] rounded-full bg-[#545b64] border-2 border-white shadow-[0_0_1px_#545b64]" />
          </div>
          <div className="ml-[22px] w-[85px] h-[24px] border border-[#545b64] rounded-[2px] flex items-center justify-center gap-[2px] text-[15px] font-bold text-[#545b64]">
            100%
            <svg width="11" height="9" viewBox="0 0 11 9"><path d="M0 0 H11 L5.5 9 Z" fill="#545b64" /></svg>
          </div>
        </div>
      </div>
    </div>
  );
}
